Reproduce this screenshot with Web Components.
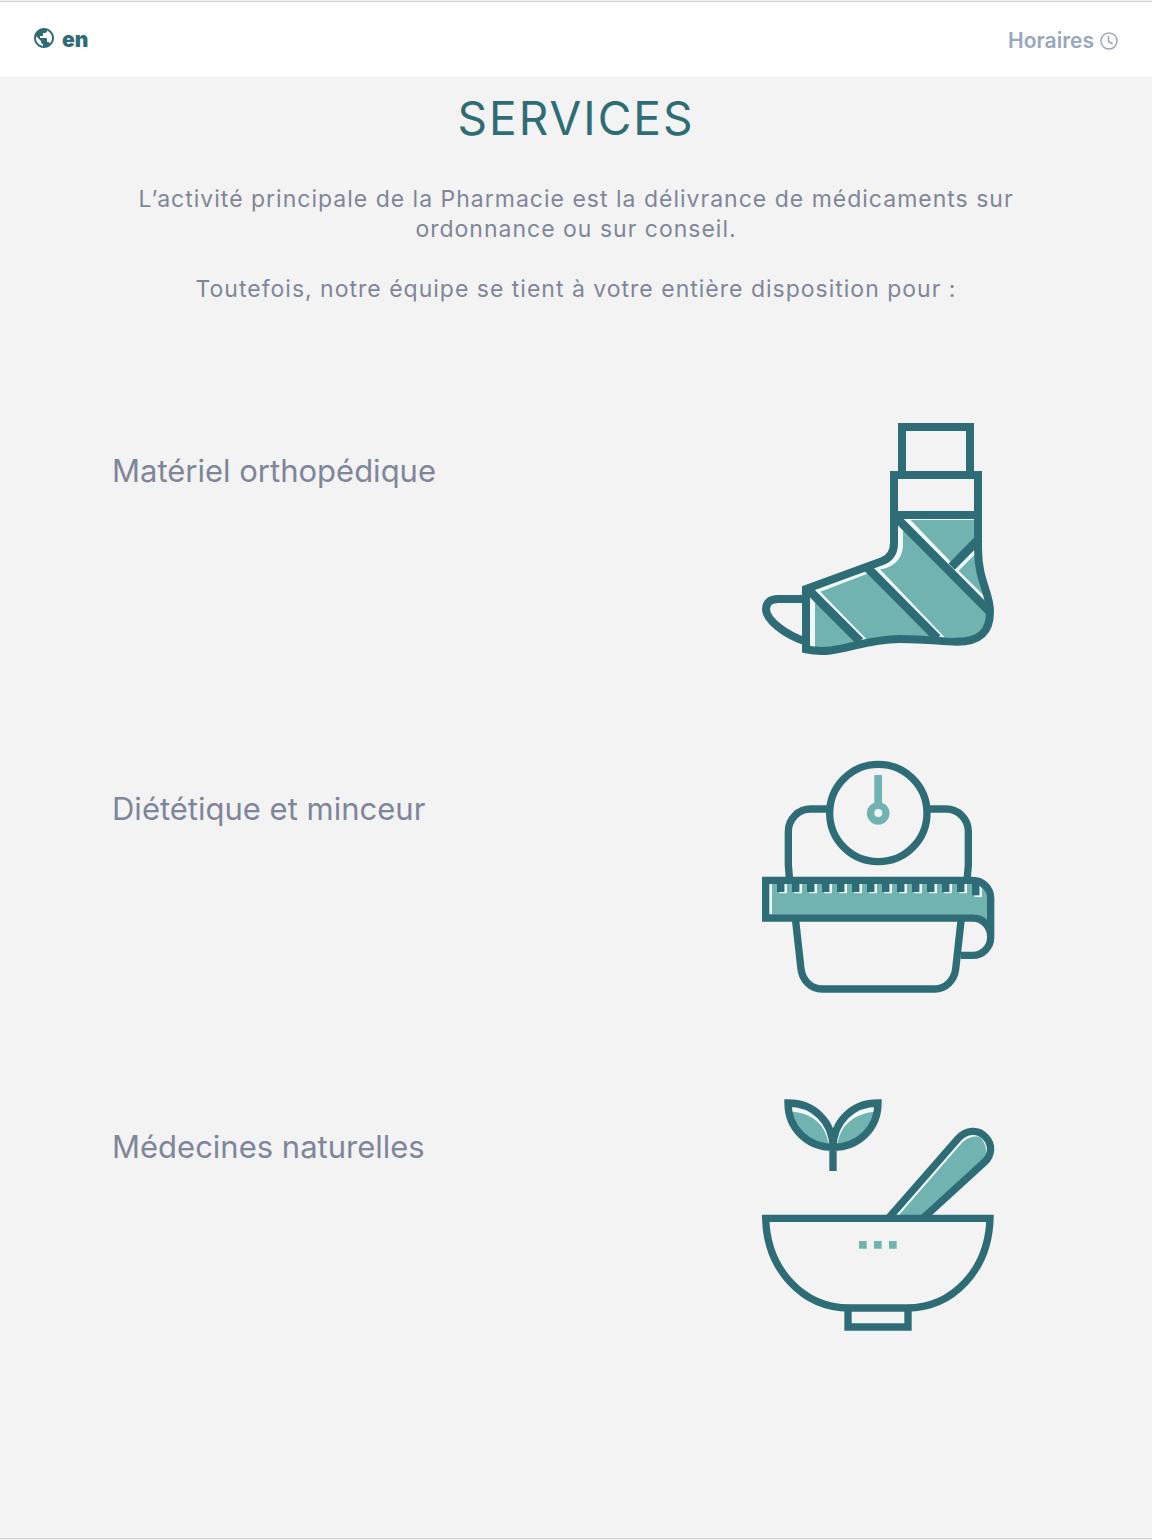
<!DOCTYPE html>
<html lang="fr">
<head>
<meta charset="utf-8">
<meta name="viewport" content="width=device-width, initial-scale=1">
<title>Services</title>
<style>
body { margin: 0; background: #f3f3f3; font-family: Inter, "Liberation Sans", sans-serif; color: #7f869a; --dark: #2f6d76; --teal: #70b3b0; --light: #f0f8f8; }
</style>
</head>
<body>
<pharmacy-page>
  <site-header slot="header"></site-header>
  <page-intro>
    <span slot="title">SERVICES</span>
    <p>L’activité principale de la Pharmacie est la délivrance de médicaments sur ordonnance ou sur conseil.</p>
    <p>Toutefois, notre équipe se tient à votre entière disposition pour :</p>
  </page-intro>
  <service-list>
    <service-item>Matériel orthopédique<icon-bandage slot="icon"></icon-bandage></service-item>
    <service-item>Diététique et minceur<icon-scale slot="icon"></icon-scale></service-item>
    <service-item>Médecines naturelles<icon-mortar slot="icon"></icon-mortar></service-item>
  </service-list>
</pharmacy-page>
<script>
const define = (name, html) => customElements.define(name, class extends HTMLElement {
  constructor() {
    super();
    this.attachShadow({ mode: 'open' }).innerHTML = html;
  }
});

const iconStyle = `<style>
:host { display: block; }
svg { display: block; width: 100%; height: auto; overflow: visible; }
.line { fill: none; stroke: var(--dark); stroke-width: 22; }
.thick { stroke-width: 24; }
.band { stroke-width: 26; }
.teal { fill: var(--teal); }
.light { fill: var(--light); }
.dark { fill: var(--dark); }
</style>`;

define('pharmacy-page', `<style>
:host { display: flex; flex-direction: column; min-height: 100vh; box-sizing: border-box; border-bottom: 1px solid #f3f3f3; }
main { flex: 1; border-bottom: 1px solid #d2d2d2; }
</style><slot name="header"></slot><main><slot></slot></main>`);

define('site-header', `<style>
:host { display: block; border-top: 1px solid #f3f3f3; }
header { display: flex; justify-content: space-between; align-items: center; box-sizing: border-box; height: 76px; padding: 0 34px 0 32px; background: #fff; border-top: 1px solid #d2d2d2; }
a { display: flex; align-items: center; font-size: 21px; line-height: 28px; text-decoration: none; }
.lang { gap: 6px; align-items: flex-start; color: var(--dark); font-weight: 900; }
.hours { gap: 6px; padding-top: 2px; color: #98a8bc; font-weight: 600; }
svg { display: block; }
</style>
<header>
  <a class="lang" href="#en"><svg width="24" height="24" viewBox="0 0 24 24" fill="currentColor" aria-hidden="true"><path d="M12 2C6.48 2 2 6.48 2 12s4.48 10 10 10 10-4.48 10-10S17.52 2 12 2zm-1 17.93c-3.95-.49-7-3.85-7-7.93 0-.62.08-1.21.21-1.79L9 15v1c0 1.1.9 2 2 2v1.93zm6.9-2.54c-.26-.81-1-1.39-1.9-1.39h-1v-3c0-.55-.45-1-1-1H8v-2h2c.55 0 1-.45 1-1V7h2c1.1 0 2-.9 2-2v-.41c2.93 1.19 5 4.06 5 7.41 0 2.08-.8 3.97-2.1 5.39z"/></svg>en</a>
  <a class="hours" href="#horaires">Horaires<svg width="18" height="18" viewBox="0 0 18 18" fill="none" stroke="currentColor" stroke-width="1.5" aria-hidden="true"><circle cx="9" cy="9" r="8"/><path d="M8.5 4V9.5L12.5 12"/></svg></a>
</header>`);

define('page-intro', `<style>
:host { display: block; padding: 14px 112px 0; text-align: center; }
h1 { margin: 0 0 39px; color: var(--dark); font-size: 46px; line-height: 54px; font-weight: 400; letter-spacing: 2px; }
.text { display: flex; flex-direction: column; gap: 30px; font-size: 23px; line-height: 30px; letter-spacing: 1px; }
::slotted(p) { margin: 0; }
</style><h1><slot name="title"></slot></h1><div class="text"><slot></slot></div>`);

define('service-list', `<style>
:host { display: flex; flex-direction: column; gap: 106px; padding: 119px 112px; }
</style><slot></slot>`);

define('service-item', `<style>
:host { display: grid; grid-template-columns: 65% 35%; }
h2 { margin: 0; padding-top: 28px; font-size: 31px; line-height: 40px; font-weight: 400; }
.icon { width: 232px; justify-self: center; }
</style><h2><slot></slot></h2><div class="icon"><slot name="icon"></slot></div>`);

define('icon-bandage', iconStyle + `<svg viewBox="36 39 696 696" aria-hidden="true">
<path class="light" d="M432 315H684V430Q690 480 708 540L720 600Q718 695 620 695L450 687L320 704L168 720V537L395 454Q432 440 432 400Z"/>
<path class="teal" d="M482 330H676V385L602 455Z"/>
<path class="teal" d="M626 482L678 430Q688 500 708 563Z"/>
<path class="teal" d="M444 345L459 360V405C459 445 430 474 390 478L584 682C650 690 712 680 714 606Z"/>
<path class="teal" d="M211 545L352 491L548 690L352 690Z"/>
<path class="teal" d="M195 560V714Q250 714 326 697Z"/>
<path class="line thick" d="M168 567H84C60 567 48 578 48 598C48 630 105 674 168 695"/>
<path class="line thick" d="M456 195V51H660V195M432 315H684"/>
<path class="line band" d="M434 318L717 603M688 386L605 470M354 475L562 685M172 536L330 694"/>
<path class="line thick" d="M432 195H684V415C684 515 720 545 720 605C720 665 691 695 620 695C570 695 540 687 450 687C320 689 265 738 168 718V537L396 454C420 445 432 425 432 400Z"/>
</svg>`);

const teeth = Array.from({ length: 13 }, (_, i) => {
  const x = 81 + 45 * i;
  return `<path class="light" d="M${x + 7} 424H${x + 22}V400H${x + 30}V430H${x + 7}Z"/><path class="dark" d="M${x} 400H${x + 22}V426H${x}Z"/>`;
}).join('');

define('icon-scale', iconStyle + `<svg viewBox="36 33 696 696" aria-hidden="true">
<path class="line" d="M232 177H182C145 177 115 207 115 244V345L119 392M538 177H588C625 177 655 207 655 244V345L651 392M136 504L153 657C157 690 182 717 216 717H554C588 717 613 690 617 657L634 504"/>
<circle class="line" cx="385" cy="189" r="146"/>
<path class="teal" d="M373 75H396V158A34 34 0 1 1 373 158ZM385 177A12 12 0 1 0 385 201A12 12 0 1 0 385 177Z" fill-rule="evenodd"/>
<path class="light" d="M56 400H72V496H56Z"/>
<path class="teal" d="M66 400H668Q711 402 711 445V512Q692 493 668 493H66Z"/>
${teeth}
<path class="light" d="M673 434H688V408Q696 412 696 420V441H673Z"/>
<path class="dark" d="M666 400H688V436H666Z"/>
<path class="line" d="M632 616H668C698 616 722 592 722 562V445C722 415 698 391 668 391H47V504H668C698 504 722 528 722 560"/>
</svg>`);

define('icon-mortar', iconStyle + `<svg viewBox="36 39 696 696" aria-hidden="true">
<path class="light" d="M114 51C190 51 248 105 249 184C170 184 114 125 114 51ZM384 51C308 51 250 105 249 184C328 184 384 125 384 51Z"/>
<path class="teal" d="M126 77C185 80 231 117 236 180C175 175 128 135 126 77ZM372 77C313 84 268 117 262 180C323 175 370 135 372 77Z"/>
<path class="line" d="M114 51C190 51 248 105 249 184C170 184 114 125 114 51ZM384 51C308 51 250 105 249 184C328 184 384 125 384 51ZM249 130V255"/>
<path class="light" d="M418 395L628 158Q665 120 705 152Q740 190 702 228L522 395Z"/>
<path class="teal" d="M440 395L638 168Q658 148 690 152Q722 190 698 224L522 395Z"/>
<path class="line" d="M416 396L624 158C648 131 684 129 706 152C728 175 727 206 703 229L520 396"/>
<path class="line" d="M47 397H720C716 550 610 666 470 666H298C158 666 51 550 47 397ZM294 666V723H474V666"/>
<path class="teal" d="M327 465H350V488H327ZM372 465H395V488H372ZM417 465H440V488H417Z"/>
</svg>`);
</script>
</body>
</html>
